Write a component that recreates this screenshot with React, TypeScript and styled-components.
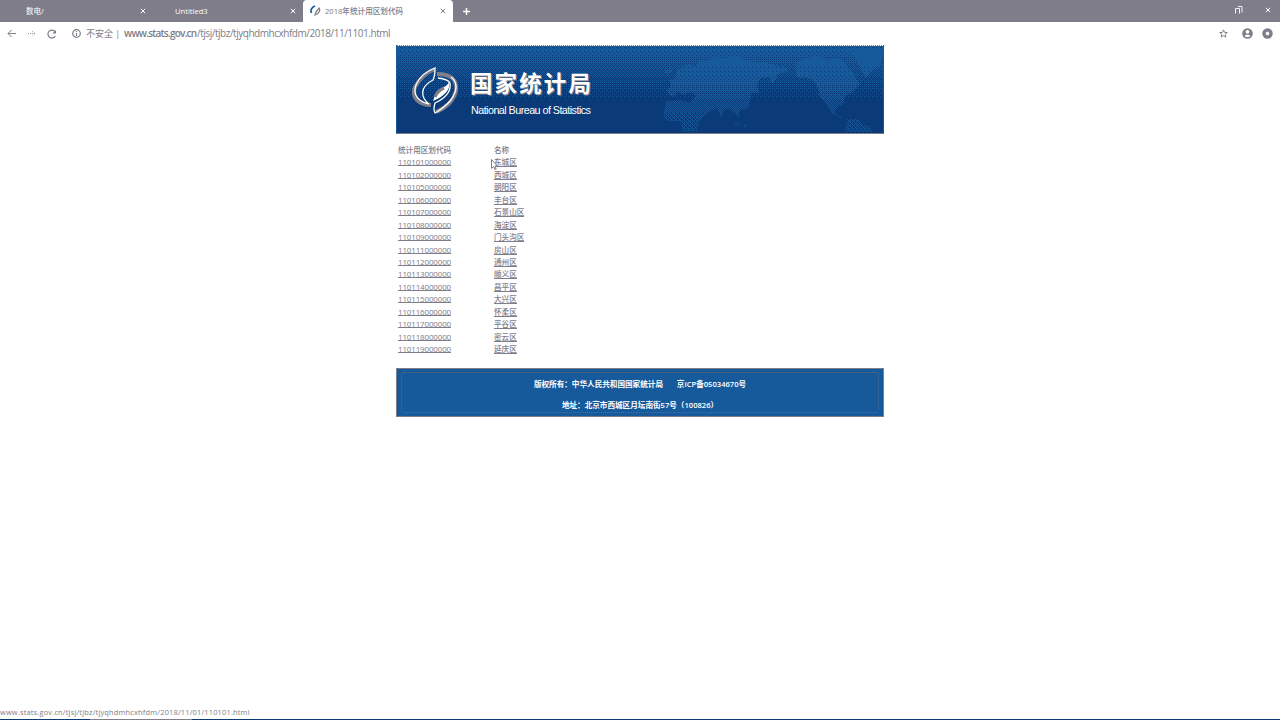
import React from "react";
import styled, { createGlobalStyle } from "styled-components";

const GRAY = "#7e7d89";
const BLUE = "#165a9c";
const NAVY = "#0a3a78";

const Global = createGlobalStyle`
  * { box-sizing: border-box; }
  body { margin: 0; background: #fff; overflow: hidden;
    font-family: "Open Sans", "Noto Sans", "Noto Sans CJK SC", sans-serif; }
`;

const Window = styled.div`
  width: 1280px; height: 720px; display: flex; flex-direction: column; background: #fff;
`;
const TabStrip = styled.div`
  height: 22px; flex: none; display: flex; align-items: stretch; background: ${GRAY}; color: #fff;
`;
const Tab = styled.div<{ $w: number; $left: number; $right: number; $active?: boolean }>`
  width: ${p => p.$w}px; padding: 0 ${p => p.$right}px 0 ${p => p.$left}px; display: flex; align-items: center;
  background: ${p => (p.$active ? "#fff" : "transparent")};
  color: ${p => (p.$active ? GRAY : "#fff")};
  border-radius: 4px 4px 0 0;
`;
const Label = styled.span<{ $size: number; $spacing?: number; $weight?: number }>`
  font-size: ${p => p.$size}px; letter-spacing: ${p => p.$spacing || 0}px; font-weight: ${p => p.$weight || 400};
  line-height: 12px; white-space: pre;
`;
const Spacer = styled.span`flex: 1;`;
const Title = styled(Label)`margin: 0 auto 0 4px; font-weight: 500;`;
const Glyph = styled.svg`
  display: block; flex: none; fill: none; stroke: currentColor;
`;
const NewTab = styled.div`padding-left: 10px; display: flex; align-items: center;`;
const WindowButtons = styled.div`
  margin-left: auto; padding-right: 9px; display: flex; gap: 22px; align-items: center; padding-bottom: 2px;
`;
const AddressBar = styled.div`
  height: 23px; flex: none; display: flex; align-items: center; padding: 0 7px; color: ${GRAY};
`;
const Nav = styled.div`display: flex; gap: 11px; width: 65px; align-items: center;`;
const Security = styled.div`display: flex; align-items: center; gap: 5px; width: 52px;`;
const Url = styled.div`
  font-size: 10px; line-height: 14px; display: flex; white-space: pre; padding-bottom: 1px;
`;
const Host = styled.span`font-weight: 600; letter-spacing: -0.75px; width: 73px;`;
const Path = styled.span`letter-spacing: -0.47px; font-weight: 500;`;
const Actions = styled.div`margin-left: auto; display: flex; align-items: center;`;
const Account = styled.div`display: flex; gap: 9px; margin-left: 14px;`;

const Page = styled.main`
  flex: 1; min-height: 0; width: 488px; margin: 0 auto; display: flex; flex-direction: column;
`;
const Banner = styled.header`
  height: 89px; flex: none; display: grid; border: 1px solid ${BLUE};
  border-top: 1px dotted ${GRAY}; border-bottom-color: ${GRAY};
  background: ${NAVY}; background-clip: padding-box;
  > * { grid-area: 1 / 1; }
`;
const WorldMap = styled.svg`display: block; width: 486px; height: 87px; shape-rendering: crispEdges;`;
const Brand = styled.div`display: flex; padding: 19px 0 0 15px; gap: 12px; color: #fff;`;
const BrandText = styled.div`display: flex; flex-direction: column; padding-top: 2px;`;
const BrandName = styled.div`
  font: 700 22.5px/32px "Noto Sans CJK SC", sans-serif; letter-spacing: 2.1px; white-space: nowrap;
  margin-top: -1px;
  text-shadow: 1px 1px 0 ${GRAY};
`;
const BrandLatin = styled.div`
  font: 10.8px/18px "Liberation Sans", sans-serif; margin-top: 3px; padding-left: 1px; letter-spacing: -0.56px; white-space: nowrap;
`;
const Districts = styled.table`
  margin-top: 9.8px; border-collapse: collapse; width: 200px; color: ${GRAY};
  font-size: 8px; line-height: 12px; table-layout: fixed;
  th, td { padding: 0; height: 12.44px; font-weight: 500; text-align: left; white-space: nowrap; vertical-align: middle; }
  th:first-child, td:first-child { width: 98px; padding-left: 2px; }
`;
const Heading = styled.th`font-size: 7.6px;`;
const Code = styled.a`
  display: inline-block; border-bottom: 1px solid ${GRAY}; font-size: 8px; line-height: 9px; height: 9px; letter-spacing: -0.16px;
`;
const Name = styled(Code)`font-size: 7.6px; letter-spacing: 0;`;
const Footer = styled.footer`
  margin-top: 13.2px; height: 49px; display: flex; flex-direction: column; align-items: center; flex: none;
  background: ${BLUE}; border: 1px solid ${GRAY}; color: #fff; padding: 3px 4px;
`;
const FooterFrame = styled.div`
  width: 100%; height: 42px; border: 1px dotted ${GRAY}99; border-radius: 3px;
  display: flex; flex-direction: column; align-items: center; gap: 9px; padding-top: 5px;
`;
const StatusBar = styled.div`
  height: 12px; flex: none; color: ${GRAY}; font-size: 7.4px; line-height: 10px; white-space: nowrap; letter-spacing: 0.2px;
`;
const TaskEdge = styled.div`
  height: 1px; flex: none; background: linear-gradient(90deg, ${NAVY} 0 90px, ${GRAY} 90px 192px, ${NAVY} 192px);
`;
const Pointer = styled.svg`position: absolute; left: 491px; top: 159px;`;

const Cross = () => (
  <Glyph width="6" height="6" viewBox="0 0 6 6"><path d="M.8.8l4.4 4.4M5.2.8L.8 5.2" strokeWidth="1" /></Glyph>
);

/* Ordered 4x4 dither: cells of a tile light up in this order as the tone rises. */
const ORDER = [[0, 0], [2, 2], [2, 0], [0, 2], [1, 1], [3, 3], [3, 1], [1, 3], [1, 0], [3, 2], [3, 0], [1, 2], [0, 1], [2, 3], [2, 1], [0, 3]];
const LEVELS = [1, 2, 4, 6, 8, 10, 12, 14, 15, 16];
const SEA: [number, number, number][] = [
  [46, 5, 15], [51, 6, 14], [57, 7, 12], [64, 6, 10], [70, 7, 8], [77, 6, 6], [83, 6, 4], [89, 7, 2], [96, 4, 1],
];
const LAND: [number, number, number][] = [
  [46, 21, 16], [67, 9, 15], [76, 8, 14], [84, 8, 12], [92, 8, 10], [100, 12, 8], [112, 21, 6],
];

const rows: [string, string][] = [
  ["110101000000", "东城区"], ["110102000000", "西城区"], ["110105000000", "朝阳区"],
  ["110106000000", "丰台区"], ["110107000000", "石景山区"], ["110108000000", "海淀区"],
  ["110109000000", "门头沟区"], ["110111000000", "房山区"], ["110112000000", "通州区"],
  ["110113000000", "顺义区"], ["110114000000", "昌平区"], ["110115000000", "大兴区"],
  ["110116000000", "怀柔区"], ["110117000000", "平谷区"], ["110118000000", "密云区"],
  ["110119000000", "延庆区"],
];

export default function App() {
  return (
    <>
      <Global />
      <Window>
        <TabStrip>
          <Tab $w={152} $left={26} $right={6}><Label $size={7.5}>数电/</Label><Spacer /><Cross /></Tab>
          <Tab $w={151} $left={23} $right={7}><Label $size={7.6}>Untitled3</Label><Spacer /><Cross /></Tab>
          <Tab $w={150} $left={7} $right={7} $active>
            <Glyph width="11" height="12" viewBox="0 0 11 12">
              <path d="M5 1C2 2 0 5 1.5 8" stroke={BLUE} strokeWidth="1.6" />
              <path d="M5 10c3-1 6-4 4-7L6 7z" stroke={GRAY} strokeWidth="1.3" />
            </Glyph>
            <Title $size={7.6}>2018年统计用区划代码</Title>
            <Cross />
          </Tab>
          <NewTab><Glyph width="7" height="7" viewBox="0 0 7 7"><path d="M3.5 0v7M0 3.5h7" strokeWidth="1.5" /></Glyph></NewTab>
          <WindowButtons>
            <Glyph width="8" height="8" viewBox="0 0 8 8"><path d="M.5 7.5v-5h4v5M3 .5h4v6" strokeWidth=".9" /></Glyph>
            <Cross />
          </WindowButtons>
        </TabStrip>
        <AddressBar>
          <Nav>
            <Glyph width="9" height="9" viewBox="0 0 9 9"><path d="M9 4.5H1M4.5 1L1 4.5 4.5 8" /></Glyph>
            <Glyph width="9" height="9" viewBox="0 0 9 9" strokeDasharray="1 1"><path d="M1 4.5h7M5 2l3 2.5L5 7" strokeWidth=".8" /></Glyph>
            <Glyph width="10" height="10" viewBox="0 0 10 10"><path d="M8.4 7A4 4 0 1 1 8 2.5" strokeWidth="1.2" /><path d="M9 1v3.6H5.4z" fill="currentColor" stroke="none" /></Glyph>
          </Nav>
          <Security>
            <Glyph width="9" height="9" viewBox="0 0 9 9"><circle cx="4.5" cy="4.5" r="3.8" strokeWidth="1.2" /><path d="M4.5 2v1M4.5 4v3" strokeWidth="1.1" /></Glyph>
            <Label $size={9}>不安全 |</Label>
          </Security>
          <Url><Host>www.stats.gov.cn</Host><Path>/tjsj/tjbz/tjyqhdmhcxhfdm/2018/11/1101.html</Path></Url>
          <Actions>
            <Glyph width="9" height="9" viewBox="0 0 10 10"><path d="M5 1l1.2 2.8 3 .2-2.3 2 .7 3L5 7.4 2.4 9l.7-3L.8 4l3-.2z" strokeWidth="1.1" /></Glyph>
            <Account>
              <Glyph width="11" height="11" viewBox="0 0 11 11"><circle cx="5.5" cy="5.5" r="5.3" fill={GRAY} stroke="none" /><circle cx="5.5" cy="3.8" r="1.9" fill="#fff" stroke="none" /><path d="M2.3 8q3.2-2.5 6.4 0-3 2.3-6.4 0" fill="#fff" stroke="none" /></Glyph>
              <Glyph width="11" height="11" viewBox="0 0 11 11"><circle cx="5.5" cy="5.5" r="5.2" fill={GRAY} stroke="none" /><path d="M5.5 3.8v3.4M3.8 5.5h3.4" stroke="#fff" strokeWidth="2" /></Glyph>
            </Account>
          </Actions>
        </AddressBar>
        <Page>
          <Banner>
            <WorldMap viewBox="397 46 486 87">
              <defs>
                {LEVELS.map(n => (
                  <pattern key={n} id={`tone${n}`} width="4" height="4" patternUnits="userSpaceOnUse">
                    {ORDER.slice(0, n).map(([x, y]) => <rect key={`${x}${y}`} x={x} y={y} width="1" height="1" fill={BLUE} />)}
                  </pattern>
                ))}
                <clipPath id="continents">
                  <path d="M668 94L667 90 671 86 669 80 675 79 677 71 683 66 690 64 695 67 700 60 707 61 714 57 724 58 737 56 748 61 762 62 776 65 787 69 787 72 779 73 773 84 769 77 760 78 757 87 760 93 752 93 748 108 740 110 739 118 734 113 730 108 724 110 721 119 717 108 713 110 707 113 700 112 690 103 696 96 692 92 682 95 678 92 673 97z" />
                  <path d="M666 101L680 100 690 103 700 112 707 112 699 122 697 131 683 132 680 121 668 121 663 117z" />
                  <path d="M795 65L800 60 817 56 828 60 840 58 848 66 856 78 860 84 853 91 845 97 843 104 837 107 835 112 840 117 844 117 840 118 832 113 825 102 820 97 818 88 813 80 805 77 797 78z" />
                  <path d="M851 50L883 48 880 66 873 70 866 78 861 69z" />
                  <path d="M847 119L858 119 862 124 870 127 873 132 845 132z" />
                  <path d="M665 70h8l-3 3h-6zM735 122l5 1-1 3-4-2zM744 125l3-2-1 4h-4z" />
                </clipPath>
              </defs>
              {SEA.map(([y, h, tone]) => <rect key={y} x="397" y={y} width="486" height={h} fill={`url(#tone${tone})`} />)}
              <g clipPath="url(#continents)">
                {LAND.map(([y, h, tone]) => <rect key={y} x="640" y={y} width="243" height={h} fill={`url(#tone${tone})`} />)}
              </g>
            </WorldMap>
            <Brand>
              <Glyph width="46" height="50" viewBox="412 65 46 50">
                <g stroke={GRAY} strokeWidth="4"><path d="M435 69q-13 5-20 18c-4 11 4 18 16 18" /><path d="M437 74c15 0 20 6 19 17-3 12-13 18-20 21" /></g>
                <g stroke="#fff" strokeWidth="1.3">
                  <path d="M435 68q-14 5-19 17c-4 11 4 17 13 19-8-6-10-17 4-24q2-4 2-12z" />
                  <path d="M438 78c8 1 11 3 12 5q2 12-15 20-2 7 0 10 9-5 16-13 10-15 0-23" />
                </g>
                <path d="M449 81q3 12-16 20 2-8 9-13 7-3 7-7z" fill="#fff" stroke="none" />
                <path d="M444 88q-7 3-9 9" stroke={GRAY} strokeWidth="3" />
              </Glyph>
              <BrandText><BrandName>国家统计局</BrandName><BrandLatin>National Bureau of Statistics</BrandLatin></BrandText>
            </Brand>
          </Banner>
          <Districts>
            <thead><tr><Heading>统计用区划代码</Heading><Heading>名称</Heading></tr></thead>
            <tbody>{rows.map(([code, name]) => <tr key={code}><td><Code>{code}</Code></td><td><Name>{name}</Name></td></tr>)}</tbody>
          </Districts>
          <Footer>
            <FooterFrame>
              <Label $size={7.6} $weight={600}>版权所有：中华人民共和国国家统计局       京ICP备05034670号</Label>
              <Label $size={7.6} $weight={600}>地址：北京市西城区月坛南街57号（100826）</Label>
            </FooterFrame>
          </Footer>
        </Page>
        <StatusBar>www.stats.gov.cn/tjsj/tjbz/tjyqhdmhcxhfdm/2018/11/01/110101.html</StatusBar>
        <TaskEdge />
      </Window>
      <Pointer width="7" height="12" viewBox="0 0 7 12"><path d="M.5.5v9l2-2 1.5 3 1.2-.6L4 7h2.5z" fill="#fff" stroke={GRAY} /></Pointer>
    </>
  );
}
